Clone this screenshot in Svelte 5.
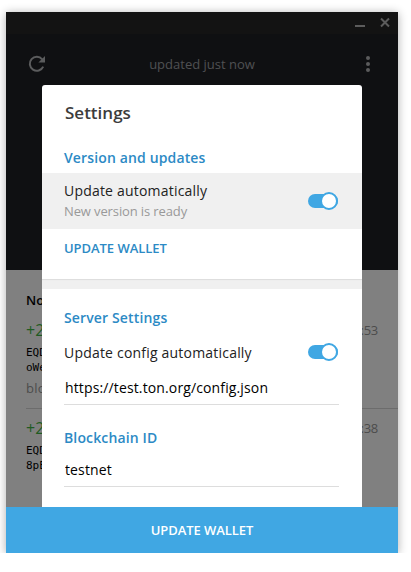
<script>
  let autoUpdate = true;
  let autoConfig = true;
  let configUrl = "https://test.ton.org/config.json";
  let blockchainId = "testnet";

  let transactions = [
    { amount: "+2", address: ["EQD", "oWe"], note: "bloc", time: ":53" },
    { amount: "+2", address: ["EQD", "8pE"], note: "", time: ":38" },
  ];
</script>

<div class="window">
  <div class="titlebar">
    <svg width="10" height="12" viewBox="0 0 10 12"><path d="M0 9h10" stroke="#5c5c5c" stroke-width="2" /></svg>
    <svg width="10" height="12" viewBox="0 0 10 12"><path d="M1 1.5l8 8M9 1.5l-8 8" stroke="#5c5c5c" stroke-width="2" /></svg>
  </div>

  <div class="header">
    <div class="toolbar">
      <svg class="refresh" width="18" height="18" viewBox="0 0 18 18">
        <path d="M15.2 11.6A7 7 0 1 1 14.2 4.3" fill="none" stroke="#5b5c5d" stroke-width="2" />
        <path d="M17 .9v6.6h-6.6z" fill="#5b5c5d" />
      </svg>
      <span>updated just now</span>
      <svg width="4" height="16" viewBox="0 0 4 16" fill="#5b5c5d">
        <circle cx="2" cy="2" r="2" />
        <circle cx="2" cy="8" r="2" />
        <circle cx="2" cy="14" r="2" />
      </svg>
    </div>
  </div>

  <div class="history">
    <div class="date">No</div>
    {#each transactions as item}
      <div class="transaction">
        <div class="summary">
          <span class="amount">{item.amount}</span>
          <span class="time">{item.time}</span>
        </div>
        {#each item.address as line}
          <div class="address">{line}</div>
        {/each}
        {#if item.note}
          <div class="note">{item.note}</div>
        {/if}
      </div>
    {/each}
  </div>

  <div class="footer">UPDATE WALLET</div>

  <div class="modal">
    <h1>Settings</h1>
    <h2>Version and updates</h2>
    <div class="row active">
      <div class="text">
        <div class="label">Update automatically</div>
        <div class="hint">New version is ready</div>
      </div>
      <button class="toggle" class:on={autoUpdate} aria-label="Update automatically" on:click={() => (autoUpdate = !autoUpdate)}><i></i></button>
    </div>
    <div class="link">UPDATE WALLET</div>
    <div class="separator"></div>
    <h2>Server Settings</h2>
    <div class="row config">
      <div class="label">Update config automatically</div>
      <button class="toggle" class:on={autoConfig} aria-label="Update config automatically" on:click={() => (autoConfig = !autoConfig)}><i></i></button>
    </div>
    <input class="url" type="text" aria-label="Config" bind:value={configUrl} />
    <h2>Blockchain ID</h2>
    <input class="chain" type="text" aria-label="Blockchain ID" bind:value={blockchainId} />
  </div>
</div>

<style>
  :global(body) {
    background: #fff;
    overflow: hidden;
  }

  .window {
    position: relative;
    display: flex;
    flex-direction: column;
    width: 392px;
    height: 541px;
    margin: 12px 0 0 6px;
    background: #808080;
    box-shadow: 0 1px 9px rgb(0 0 0 / 32%);
    font-family: "Open Sans", sans-serif;
    font-size: 14px;
  }

  svg {
    display: block;
  }

  .titlebar {
    display: flex;
    justify-content: flex-end;
    gap: 15px;
    box-sizing: border-box;
    height: 22px;
    padding: 5px 8px 0 0;
    background: #131313;
  }

  .header {
    height: 236px;
    background: #0f1012;
  }

  .toolbar {
    display: flex;
    align-items: center;
    justify-content: space-between;
    height: 60px;
    padding: 0 28px 0 22px;
    color: #505152;
    font-size: 13px;
  }

  .toolbar span {
    margin-right: 8px;
  }

  .history {
    flex: 1;
    overflow: hidden;
    padding: 20px 0 0 20px;
  }

  .date {
    height: 20px;
    line-height: 20px;
    font-size: 13px;
    font-weight: 600;
    color: #000;
  }

  .transaction {
    height: 90px;
    padding-top: 8px;
  }

  .transaction + .transaction {
    padding-top: 7px;
    border-top: 1px solid #6c6c6c;
  }

  .summary {
    display: flex;
    justify-content: space-between;
    height: 26px;
    line-height: 24px;
    padding-right: 20px;
  }

  .amount {
    font-size: 16px;
    color: #1e5b22;
  }

  .time {
    font-size: 13px;
    letter-spacing: -0.3px;
    line-height: 25px;
    color: #4c4c4c;
  }

  .address {
    height: 15px;
    line-height: 18px;
    font-family: "DejaVu Sans Mono", monospace;
    font-size: 11px;
    color: #000;
  }

  .note {
    height: 24px;
    line-height: 28px;
    font-size: 13px;
    letter-spacing: 0.2px;
    color: #4c4c4c;
  }

  .footer {
    height: 46px;
    line-height: 47px;
    background: #40a7e3;
    color: #fff;
    font-size: 13px;
    font-weight: 600;
    text-align: center;
    letter-spacing: -0.05px;
  }

  .modal {
    position: absolute;
    top: 73px;
    left: 36px;
    width: 320px;
    height: 422px;
    overflow: hidden;
    background: #fff;
    border-radius: 3px 3px 0 0;
    color: #222;
  }

  h1 {
    margin: 0;
    padding: 16px 23px 20px;
    line-height: 24px;
    font-size: 17px;
    font-weight: 600;
    color: #3c3c3c;
  }

  h2 {
    margin: 0;
    padding: 0 22px;
    line-height: 28px;
    font-size: 14px;
    font-weight: 600;
    letter-spacing: 0.14px;
    color: #2c8ac5;
  }

  h1 + h2 {
    margin-top: -1px;
    margin-bottom: 1px;
  }

  .row {
    display: flex;
    align-items: center;
    justify-content: space-between;
    padding: 0 24px 0 22px;
  }

  .active {
    height: 56px;
    background: #f0f0f0;
  }

  .text {
    padding-bottom: 2px;
  }

  .label {
    line-height: 21px;
    letter-spacing: 0.2px;
  }

  .hint {
    line-height: 20px;
    font-size: 13px;
    letter-spacing: -0.12px;
    color: #999;
  }

  .link {
    height: 50px;
    line-height: 38px;
    padding: 0 22px;
    font-size: 13px;
    font-weight: 600;
    letter-spacing: -0.05px;
    color: #2c8ac5;
  }

  .separator {
    height: 10px;
    margin-bottom: 15px;
    background: #f0f0f0;
    box-shadow: inset 0 2px 1px -1px #dcdcdc;
  }

  .config {
    height: 40px;
  }

  .toggle {
    display: flex;
    align-items: center;
    justify-content: flex-start;
    width: 30px;
    height: 14px;
    padding: 0;
    border: none;
    border-radius: 7px;
    background: #bbb;
  }

  .toggle.on {
    justify-content: flex-end;
    background: #40a7e3;
  }

  .toggle i {
    flex: none;
    box-sizing: border-box;
    width: 18px;
    height: 18px;
    border: 2px solid #40a7e3;
    border-radius: 50%;
    background: #fff;
  }

  input {
    display: block;
    box-sizing: border-box;
    width: 275px;
    height: 32px;
    margin: 0 0 0 22px;
    padding: 0 1px 2px;
    border: none;
    border-bottom: 1px solid #ddd;
    outline: none;
    background: none;
    font-family: inherit;
    font-size: 14px;
    letter-spacing: 0.13px;
    color: #000;
  }

  .url {
    height: 33px;
    margin-bottom: 19px;
  }

  .chain {
    margin-top: 3px;
  }
</style>
